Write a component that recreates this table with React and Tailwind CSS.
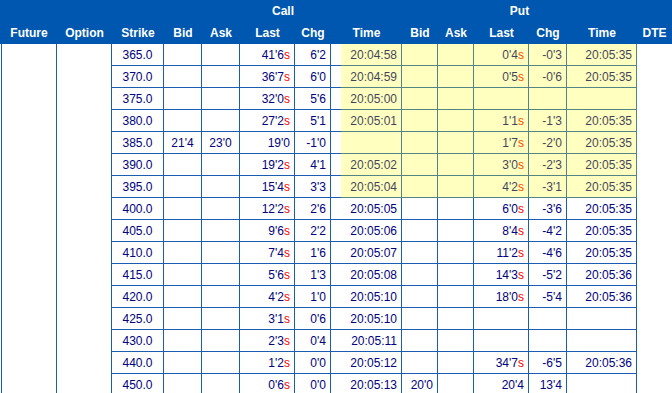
import React from "react";

const rows = [
  ["365.0", "", "", "41'6s", "6'2", "20:04:58", "", "", "0'4s", "-0'3", "20:05:35"],
  ["370.0", "", "", "36'7s", "6'0", "20:04:59", "", "", "0'5s", "-0'6", "20:05:35"],
  ["375.0", "", "", "32'0s", "5'6", "20:05:00", "", "", "", "", ""],
  ["380.0", "", "", "27'2s", "5'1", "20:05:01", "", "", "1'1s", "-1'3", "20:05:35"],
  ["385.0", "21'4", "23'0", "19'0", "-1'0", "", "", "", "1'7s", "-2'0", "20:05:35"],
  ["390.0", "", "", "19'2s", "4'1", "20:05:02", "", "", "3'0s", "-2'3", "20:05:35"],
  ["395.0", "", "", "15'4s", "3'3", "20:05:04", "", "", "4'2s", "-3'1", "20:05:35"],
  ["400.0", "", "", "12'2s", "2'6", "20:05:05", "", "", "6'0s", "-3'6", "20:05:35"],
  ["405.0", "", "", "9'6s", "2'2", "20:05:06", "", "", "8'4s", "-4'2", "20:05:35"],
  ["410.0", "", "", "7'4s", "1'6", "20:05:07", "", "", "11'2s", "-4'6", "20:05:35"],
  ["415.0", "", "", "5'6s", "1'3", "20:05:08", "", "", "14'3s", "-5'2", "20:05:36"],
  ["420.0", "", "", "4'2s", "1'0", "20:05:10", "", "", "18'0s", "-5'4", "20:05:36"],
  ["425.0", "", "", "3'1s", "0'6", "20:05:10", "", "", "", "", ""],
  ["430.0", "", "", "2'3s", "0'4", "20:05:11", "", "", "", "", ""],
  ["440.0", "", "", "1'2s", "0'0", "20:05:12", "", "", "34'7s", "-6'5", "20:05:36"],
  ["450.0", "", "", "0'6s", "0'0", "20:05:13", "20'0", "", "20'4", "13'4", ""],
];

const cols = [
  { w: "w-[52px]", a: "justify-center" },
  { w: "w-[38px]", a: "justify-center" },
  { w: "w-[38px]", a: "justify-center" },
  { w: "w-[55px]", a: "justify-end pr-[4px]" },
  { w: "w-[36px]", a: "justify-end pr-[4px]" },
  { w: "w-[71px]", a: "justify-end pr-[4px]" },
  { w: "w-[36px]", a: "justify-end pr-[4px]" },
  { w: "w-[36px]", a: "justify-end pr-[4px]" },
  { w: "w-[55px]", a: "justify-end pr-[4px]" },
  { w: "w-[38px]", a: "justify-end pr-[4px]" },
  { w: "w-[70px]", a: "justify-end pr-[4px]" },
];

function Val({ v }) {
  if (v.endsWith("s")) {
    return (
      <span>
        {v.slice(0, -1)}
        <span className="text-[#ff0000]">s</span>
      </span>
    );
  }
  return <span>{v}</span>;
}

export default function App() {
  return (
    <div
      className="relative w-[672px] h-[393px] overflow-hidden bg-white text-[12px] leading-none"
      style={{ fontFamily: '"Liberation Sans", Arial, sans-serif' }}
    >
      {/* Header */}
      <div className="h-[44px] bg-[#0057b0] text-white font-bold">
        <div className="flex h-[22px] pl-[1px]">
          <div className="w-[56px]" />
          <div className="w-[55px]" />
          <div className="w-[52px]" />
          <div className="w-[238px] flex items-center justify-center">Call</div>
          <div className="w-[235px] flex items-center justify-center">Put</div>
        </div>
        <div className="flex h-[22px] pl-[1px]">
          {[
            ["Future", "w-[56px]"],
            ["Option", "w-[55px]"],
            ["Strike", "w-[52px]"],
            ["Bid", "w-[38px]"],
            ["Ask", "w-[38px]"],
            ["Last", "w-[55px]"],
            ["Chg", "w-[36px]"],
            ["Time", "w-[71px]"],
            ["Bid", "w-[36px]"],
            ["Ask", "w-[36px]"],
            ["Last", "w-[55px]"],
            ["Chg", "w-[38px]"],
            ["Time", "w-[70px]"],
            ["DTE", "w-[35px]"],
          ].map(([t, w], i) => (
            <div key={i} className={`${w} flex items-center justify-center pb-[1px]`}>
              {t}
            </div>
          ))}
        </div>
      </div>

      {/* Body */}
      <div className="flex pl-[1px] text-[#000080]">
        <div className="w-[56px] border-l border-r border-[#1a5db3]" />
        <div className="w-[55px] border-r border-[#1a5db3]" />
        <div className="flex flex-col">
          {rows.map((r, i) => (
            <div key={i} className="flex h-[22px] border-b border-[#1a5db3]">
              {r.map((v, j) => (
                <div
                  key={j}
                  className={`${cols[j].w} ${cols[j].a} flex items-center border-r border-[#1a5db3]`}
                >
                  <Val v={v} />
                </div>
              ))}
            </div>
          ))}
        </div>
        <div className="w-[35px]" />
      </div>

      {/* Highlight overlay */}
      <div className="absolute left-[341px] top-[44px] w-[296px] h-[154px] bg-[rgba(255,255,0,0.25)] pointer-events-none" />
    </div>
  );
}
